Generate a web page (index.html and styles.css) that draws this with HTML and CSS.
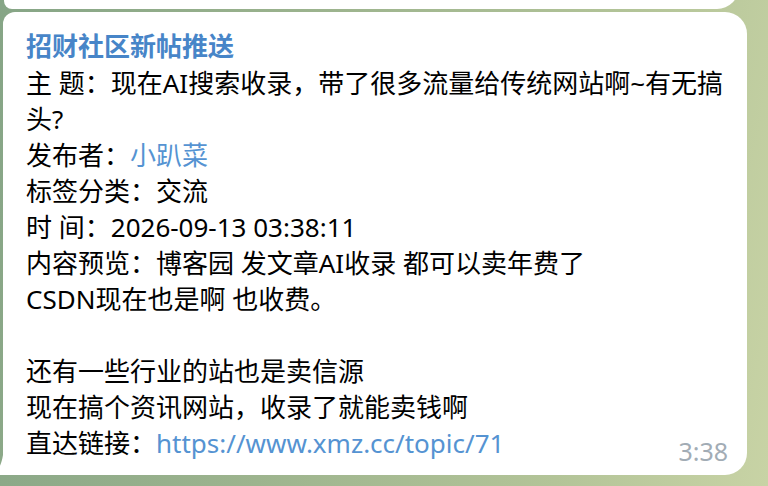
FILE: index.html
```html
<!DOCTYPE html>
<html lang="zh-CN">
<head>
<meta charset="utf-8">
<title>招财社区新帖推送</title>
<link rel="stylesheet" href="styles.css">
</head>
<body>
<div class="chat">
  <div class="bubble prev"></div>
  <div class="bubble msg">
    <div class="line title">招财社区新帖推送</div>
    <div class="line">主 题：现在AI搜索收录，带了很多流量给传统网站啊~有无搞</div>
    <div class="line">头?</div>
    <div class="line">发布者：<span class="link">小趴菜</span></div>
    <div class="line">标签分类：交流</div>
    <div class="line">时 间：2026-09-13 03:38:11</div>
    <div class="line">内容预览：博客园 发文章AI收录 都可以卖年费了</div>
    <div class="line">CSDN现在也是啊 也收费。</div>
    <div class="line blank"></div>
    <div class="line">还有一些行业的站也是卖信源</div>
    <div class="line">现在搞个资讯网站，收录了就能卖钱啊</div>
    <div class="line">直达链接：<span class="link">https://www.xmz.cc/topic/71</span></div>
    <span class="time">3:38</span>
    <svg class="tail" width="12" height="20" viewBox="0 0 12 20"><path d="M12 0 V20 H0 C6 18 10 12 12 0 Z" fill="#ffffff"/></svg>
  </div>
</div>
</body>
</html>
```

FILE: styles.css
```css
html, body {
  margin: 0;
  padding: 0;
  height: 100%;
}
body {
  background: linear-gradient(100deg, #86a586 0%, #9db48e 40%, #b3c498 75%, #c8d3a5 100%);
  font-family: "Noto Sans", "Noto Sans CJK SC", sans-serif;
  overflow: hidden;
}
.chat {
  padding: 0 21px 0 3px;
}
.bubble {
  background: #ffffff;
}
.prev {
  height: 40px;
  margin-top: -31px;
  margin-right: 8px;
  margin-left: 1px;
  border-radius: 0 0 22px 8px;
}
.msg {
  position: relative;
  margin-top: 3px;
  padding: 16px 10px 14px 23px;
  border-radius: 12px 22px 22px 0;
  color: #000000;
  font-size: 26px;
}
.line {
  height: 36px;
  line-height: 36px;
  white-space: nowrap;
}
.title {
  height: 37px;
  line-height: 37px;
  color: #4785c8;
  font-weight: 700;
}
.link {
  color: #5593d2;
}
.time {
  position: absolute;
  right: 19px;
  bottom: 11px;
  font-size: 25px;
  line-height: 25px;
  color: #a2acb5;
}
.tail {
  position: absolute;
  left: -12px;
  bottom: 0;
  display: block;
}
```
